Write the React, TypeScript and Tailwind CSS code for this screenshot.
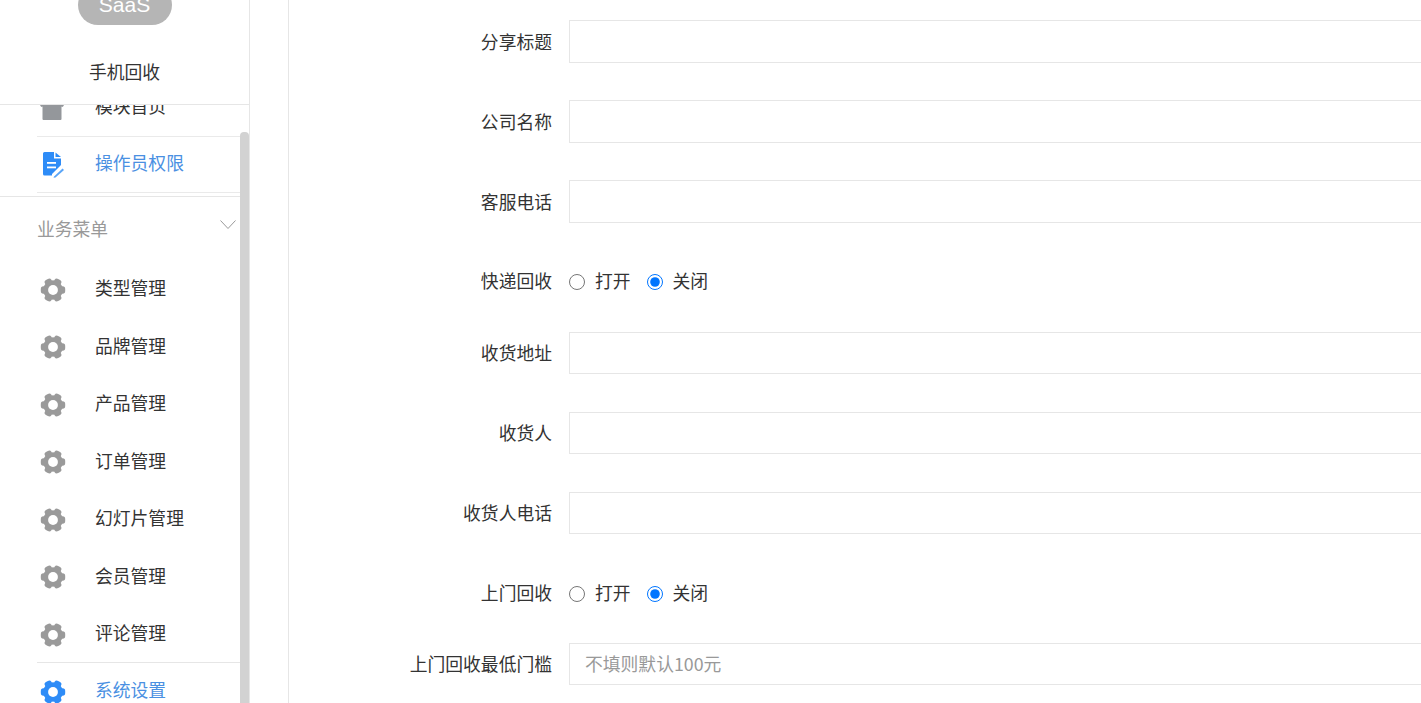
const FONT = "font-['Noto_Sans_CJK_SC','Liberation_Sans',sans-serif]"

function GearIcon({ color }: { color: string }) {
  return (
    <svg viewBox="0 0 26 26" className="h-[26px] w-[26px] shrink-0">
      <circle cx="13" cy="13" r="9.800" fill={color} />
      {[0, 60, 120, 180, 240, 300].map((deg) => (
        <rect
          key={deg}
          x="19.500"
          y="9.300"
          width="5.700"
          height="7.400"
          rx="2.600"
          fill={color}
          transform={`rotate(${deg} 13 13)`}
        />
      ))}
      <circle cx="13" cy="13" r="4.900" fill="#fff" />
    </svg>
  )
}

function HomeIcon() {
  return (
    <svg viewBox="0 0 26 26" className="h-[26px] w-[26px] shrink-0">
      <path d="M13 1 L25 9.5 L23.5 11 L22.5 10.4 V23 a1 1 0 0 1 -1 1 H4.500 a1 1 0 0 1 -1 -1 V10.400 L2.500 11 L1 9.500 Z" fill="#94979b" />
    </svg>
  )
}

function DocIcon() {
  return (
    <svg viewBox="0 0 26 26" className="h-[26px] w-[26px] shrink-0">
      <path d="M4 1.500 a1.500 1.500 0 0 1 1.500 -1.500 H15 V6.500 H22 V13 L13 22 V23.500 H5.500 a1.500 1.500 0 0 1 -1.500 -1.500 Z" fill="#2e8cf7" />
      <path d="M16.500 0.500 L22 5 H16.500 Z" fill="#2e8cf7" />
      <rect x="8" y="10" width="9" height="1.800" fill="#fff" />
      <rect x="8" y="14.500" width="9" height="1.800" fill="#fff" />
      <path d="M15 24.500 L23.500 16.500 L25 18 L16.500 25.500 L14.500 25.800 Z" fill="#5aa5f7" />
    </svg>
  )
}

const bizMenus = ['类型管理', '品牌管理', '产品管理', '订单管理', '幻灯片管理', '会员管理', '评论管理']

function Sidebar() {
  return (
    <aside className="relative flex h-full w-[250px] shrink-0 flex-col overflow-hidden border-r border-[#e6e6e6]">
      <div className="relative z-10 h-[105px] shrink-0 border-b border-[#e6e6e6] bg-white">
        <div className="mx-auto mt-[-15px] flex h-[40px] w-[94px] items-center justify-center rounded-[20px] bg-[#b5b5b5] font-['Liberation_Sans',sans-serif] text-[21px] text-white">
          SaaS
        </div>
        <p className="mt-[33px] text-center text-[17.8px] leading-[26px] text-[#333]">手机回收</p>
      </div>

      <div className="mt-[-25px] flex flex-col">
        <div className="ml-[37px] flex h-[57px] items-center border-b border-[#eaeaea] pt-[3px]">
          <span className="ml-[2px] mt-[-2px]"><HomeIcon /></span>
          <span className="ml-[30px] mt-[-9px] text-[17.8px] text-[#333]">模块首页</span>
        </div>
        <div className="ml-[37px] flex h-[56px] items-center border-b border-[#eaeaea]">
          <span className="ml-[2px]"><DocIcon /></span>
          <span className="ml-[30px] mt-[-4px] text-[17.8px] text-[#4a90e2]">操作员权限</span>
        </div>
        <div className="mt-[3px] flex h-[63px] items-center justify-between border-t border-[#e6e6e6] pl-[37px] pr-[13px]">
          <span className="text-[17.8px] text-[#999]">业务菜单</span>
          <svg viewBox="0 0 16 10" className="mb-[7px] h-[10px] w-[16px]" fill="none" stroke="#999" strokeWidth="1">
            <path d="M0.500 0.500 L8 8.500 L15.500 0.500" />
          </svg>
        </div>
        {bizMenus.map((name) => (
          <div key={name} className="ml-[37px] flex h-[57.5px] items-center">
            <span className="ml-[3px] mt-[4px]"><GearIcon color="#9a9a9a" /></span>
            <span className="ml-[29px] text-[17.8px] text-[#333]">{name}</span>
          </div>
        ))}
        <div className="ml-[37px] flex h-[56px] items-center border-t border-[#e6e6e6]">
          <span className="ml-[3px] mt-[4px]"><GearIcon color="#2e8cf7" /></span>
          <span className="ml-[29px] mt-[-2px] text-[17.8px] text-[#4a90e2]">系统设置</span>
        </div>
      </div>

      {/* 滚动条 */}
      <div className="absolute right-0 top-[132px] h-[600px] w-[9px] rounded-t-[4px] bg-[#d2d2d2]" />
    </aside>
  )
}

function TextRow({ label, placeholder, short }: { label: string; placeholder?: string; short?: boolean }) {
  return (
    <div className={short ? 'mb-[38px] flex h-[42px] items-center' : 'mb-[37px] flex h-[43px] items-center'}>
      <label className={`w-[263px] shrink-0 text-right text-[17.8px] text-[#333] ${short ? 'mt-[-2px]' : ''}`}>{label}</label>
      <input
        type="text"
        placeholder={placeholder}
        className="ml-[17px] h-full w-[1000px] shrink-0 border border-[#e6e6e6] bg-white px-[15px] pb-[2px] text-[17.8px] outline-none placeholder:text-[#999]"
      />
    </div>
  )
}

function RadioRow({ label, name, className }: { label: string; name: string; className: string }) {
  return (
    <div className={`flex h-[43px] items-center ${className}`}>
      <label className="mt-[-2px] w-[263px] shrink-0 text-right text-[17.8px] text-[#333]">{label}</label>
      <label className="ml-[17px] flex items-center text-[17.8px] text-[#333]">
        <input type="radio" name={name} className="m-0 h-[16px] w-[16px]" />
        <span className="ml-[10px] mt-[-2px]">打开</span>
      </label>
      <label className="ml-[16px] flex items-center text-[17.8px] text-[#333]">
        <input type="radio" name={name} defaultChecked className="m-0 h-[16px] w-[16px]" />
        <span className="ml-[10px] mt-[-2px]">关闭</span>
      </label>
    </div>
  )
}

export default function App() {
  return (
    <div className={`flex h-[703px] w-full overflow-hidden bg-white ${FONT}`}>
      <Sidebar />
      <main className="ml-[38px] min-w-0 flex-1 overflow-hidden border-l border-[#e6e6e6] pt-[20px]">
        <TextRow label="分享标题" />
        <TextRow label="公司名称" />
        <TextRow label="客服电话" />
        <RadioRow label="快递回收" name="express" className="mb-[29px]" />
        <TextRow label="收货地址" short />
        <TextRow label="收货人" short />
        <TextRow label="收货人电话" short />
        <RadioRow label="上门回收" name="door" className="mb-[28px]" />
        <TextRow label="上门回收最低门槛" placeholder="不填则默认100元" short />
      </main>
    </div>
  )
}
